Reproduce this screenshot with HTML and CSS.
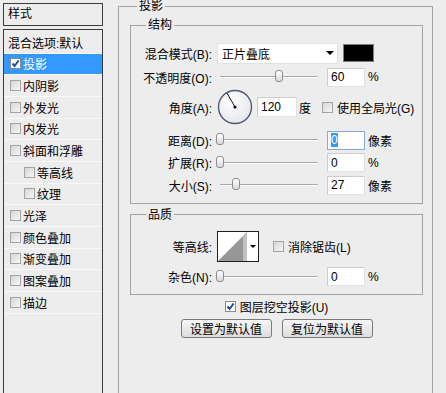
FILE: index.html
```html
<!DOCTYPE html>
<html lang="zh-CN">
<head>
  <meta charset="UTF-8" />
  <title>图层样式</title>
  <link rel="stylesheet" href="styles.css">
</head>
<body>
<div class="dialog">
  <div class="side">
    <div class="side-title">样式</div>
    <ul class="style-list">
      <li class="plain">混合选项:默认</li>
      <li class="active"><span class="cb on"><svg width="9" height="9" viewBox="0 0 9 9"><path d="M1.5 4.5 L3.6 7 L7.6 1.5" fill="none" stroke="#1f4e9c" stroke-width="2"/></svg></span>投影</li>
      <li><span class="cb"></span>内阴影</li>
      <li><span class="cb"></span>外发光</li>
      <li><span class="cb"></span>内发光</li>
      <li><span class="cb"></span>斜面和浮雕</li>
      <li class="sub"><span class="cb"></span>等高线</li>
      <li class="sub"><span class="cb"></span>纹理</li>
      <li><span class="cb"></span>光泽</li>
      <li><span class="cb"></span>颜色叠加</li>
      <li><span class="cb"></span>渐变叠加</li>
      <li><span class="cb"></span>图案叠加</li>
      <li><span class="cb"></span>描边</li>
    </ul>
  </div>

  <div class="main">
    <fieldset class="group outer">
      <legend>投影</legend>

      <fieldset class="group inner structure">
        <legend>结构</legend>
        <div class="row r-blend">
          <label class="lbl">混合模式(B):</label>
          <div class="select">正片叠底<span class="arrow"></span></div>
          <span class="swatch"></span>
        </div>
        <div class="row r-opacity">
          <label class="lbl">不透明度(O):</label>
          <div class="slider"><span class="thumb" style="left: 60%"></span></div>
          <div class="num">60</div>
          <span class="unit">%</span>
        </div>
        <div class="row r-angle">
          <label class="lbl">角度(A):</label>
          <div class="dial">
            <svg width="36" height="36" viewBox="0 0 36 36">
              <defs>
                <radialGradient id="dialbg" cx="40%" cy="35%" r="70%">
                  <stop offset="0" stop-color="#ffffff"/>
                  <stop offset="1" stop-color="#e4e5ec"/>
                </radialGradient>
              </defs>
              <circle cx="18" cy="18" r="16.5" fill="url(#dialbg)" stroke="#4f586c" stroke-width="1.4"/>
              <line x1="18" y1="18" x2="10" y2="4.2" stroke="#111" stroke-width="1"/>
              <circle cx="18" cy="18" r="1.6" fill="#000"/>
            </svg>
          </div>
          <div class="num wide">120</div>
          <span class="unit deg">度</span>
          <div class="check"><span class="cb"></span>使用全局光(G)</div>
        </div>
        <div class="row r-small first">
          <label class="lbl">距离(D):</label>
          <div class="slider"><span class="thumb" style="left: 0%"></span></div>
          <div class="num focus"><span class="sel">0</span></div>
          <span class="unit">像素</span>
        </div>
        <div class="row r-small">
          <label class="lbl">扩展(R):</label>
          <div class="slider"><span class="thumb" style="left: 0%"></span></div>
          <div class="num">0</div>
          <span class="unit">%</span>
        </div>
        <div class="row r-small">
          <label class="lbl">大小(S):</label>
          <div class="slider"><span class="thumb" style="left: 16%"></span></div>
          <div class="num">27</div>
          <span class="unit">像素</span>
        </div>
      </fieldset>

      <fieldset class="group inner quality">
        <legend>品质</legend>
        <div class="row r-contour">
          <label class="lbl">等高线:</label>
          <div class="contour">
            <svg width="29" height="29" viewBox="0 0 29 29">
              <rect width="29" height="29" fill="#fff"/>
              <polygon points="0,29 29,0 29,29" fill="#979797"/>
              <polygon points="25,4 29,0 29,29 25,29" fill="#c2c2c2"/>
            </svg>
            <div class="drop"><span class="arrow"></span></div>
          </div>
          <div class="check aa"><span class="cb"></span>消除锯齿(L)</div>
        </div>
        <div class="row r-noise">
          <label class="lbl">杂色(N):</label>
          <div class="slider"><span class="thumb" style="left: 0%"></span></div>
          <div class="num">0</div>
          <span class="unit">%</span>
        </div>
      </fieldset>

      <div class="knock"><span class="cb on"><svg width="9" height="9" viewBox="0 0 9 9"><path d="M1.5 4.5 L3.6 7 L7.6 1.5" fill="none" stroke="#1f4e9c" stroke-width="2"/></svg></span>图层挖空投影(U)</div>
      <div class="buttons">
        <button class="btn">设置为默认值</button>
        <button class="btn">复位为默认值</button>
      </div>
    </fieldset>
  </div>
</div>
</body>
</html>
```

FILE: styles.css
```css
* {
  box-sizing: border-box;
}
body {
  margin: 0;
  background-color: #ededed;
  font-family: "Liberation Sans", "Noto Sans CJK SC", sans-serif;
  font-size: 12px;
  color: #000;
}
.dialog {
  display: flex;
  width: 446px;
  height: 393px;
  overflow: hidden;
}

/* left column */
.side {
  width: 100px;
  margin: 3px 0 0 3px;
  flex-shrink: 0;
}
.side-title {
  height: 23px;
  line-height: 21px;
  padding-left: 4px;
  border: 1px solid #3c3c3c;
}
.style-list {
  list-style: none;
  margin: 3px 0 0;
  padding: 2px 0 0;
  height: 420px;
  border: 1px solid #3c3c3c;
}
.style-list li {
  display: flex;
  align-items: center;
  height: 21.67px;
  padding-left: 6px;
  border-bottom: 1px solid #f9f9f9;
  white-space: nowrap;
}
.style-list li.plain {
  padding-left: 4px;
}
.style-list li.sub {
  padding-left: 20px;
}
.style-list li.active {
  background-color: #3399ff;
  color: #fff;
}

.cb {
  display: inline-flex;
  align-items: center;
  justify-content: center;
  width: 11px;
  height: 11px;
  margin-right: 2px;
  flex-shrink: 0;
  border: 1px solid #a3a3a3;
  background: linear-gradient(135deg, #d6d6d6, #f7f7f7);
}
.cb.on {
  background: #fff;
  border-color: #8c8c8c;
}
.cb svg {
  display: block;
}

/* right column */
.main {
  flex: 1;
}
.group {
  margin: 0;
  padding: 0;
  min-width: 0;
  border: 1px solid #a3a3a3;
}
.group legend {
  padding: 0 2px;
  line-height: 14px;
}
.outer {
  margin: 0 0 0 15px;
  width: 315px;
  min-height: 420px;
  padding: 6px 9px 0 11px;
}
.outer > legend {
  margin-left: 7px;
  line-height: 12px;
}
.inner > legend {
  margin-left: 15px;
}
.structure {
  padding: 9px 0 6px;
}
.quality {
  margin-top: 4px;
  padding: 9px 0 6px;
}

.row {
  display: flex;
  align-items: center;
  white-space: nowrap;
}
.r-blend, .r-opacity {
  height: 24px;
}
.r-angle {
  height: 36px;
}
.r-small {
  height: 22.5px;
}
.r-small.first {
  margin-top: 4px;
}
.r-contour {
  height: 32px;
}
.r-noise {
  height: 22px;
  margin-top: 3px;
}
.lbl {
  width: 81px;
  flex-shrink: 0;
  text-align: right;
}

.select {
  display: flex;
  align-items: center;
  margin-left: 5px;
  width: 121px;
  height: 21px;
  padding-left: 4px;
  background: #fff;
  border: 1px solid #e1e1e1;
}
.arrow {
  width: 0;
  height: 0;
  border-left: 4px solid transparent;
  border-right: 4px solid transparent;
  border-top: 4px solid #000;
}
.select .arrow {
  margin-left: auto;
  margin-right: 3px;
}
.swatch {
  margin-left: 5px;
  width: 31px;
  height: 18px;
  background: #000;
  border: 1px solid #7e7e7e;
}

.slider {
  position: relative;
  margin-left: 8px;
  width: 98px;
  height: 2px;
  border-top: 1px solid #a9a9a9;
  border-bottom: 1px solid #fff;
}
.thumb {
  position: absolute;
  top: -7px;
  width: 8px;
  height: 12px;
  margin-left: -4px;
  border: 1px solid #8d8d8d;
  border-radius: 3px;
  background: linear-gradient(#ffffff, #d9d9d9);
}

.num {
  display: flex;
  align-items: center;
  margin-left: 9px;
  width: 38px;
  height: 19px;
  padding-left: 3px;
  background: #fff;
  border: 1px solid #e2e2e2;
  border-top-color: #cdcdcd;
  border-left-color: #cdcdcd;
}
.num.wide {
  margin-left: 4px;
  width: 40px;
  height: 20px;
}
.num.focus {
  border-color: #82acdc;
}
.sel {
  background: #3399ff;
  color: #fff;
}
.unit {
  margin-left: 3px;
}
.unit.deg {
  margin-left: 2px;
}
.dial {
  margin-left: 5px;
  width: 36px;
  height: 36px;
}
.dial svg {
  display: block;
}
.check {
  display: flex;
  align-items: center;
  margin-left: 11px;
}
.check .cb, .knock .cb {
  margin-right: 4px;
}
.check.aa {
  margin-left: 14px;
}

.contour {
  display: flex;
  margin-left: 5px;
  width: 42px;
  height: 31px;
  background: #fff;
  border: 1px solid #1e1e1e;
}
.contour svg {
  display: block;
}
.drop {
  flex: 1;
  display: flex;
  align-items: center;
  justify-content: center;
}
.drop .arrow {
  border-left-width: 3px;
  border-right-width: 3px;
  border-top-width: 3px;
}

.knock {
  display: flex;
  justify-content: center;
  align-items: center;
  height: 18px;
  margin-top: 3px;
}
.buttons {
  display: flex;
  justify-content: center;
  gap: 10px;
  margin-top: 3px;
}
.btn {
  width: 91px;
  height: 19px;
  padding: 0;
  font: inherit;
  color: #000;
  border: 1px solid #7a7a7a;
  border-radius: 3px;
  background: linear-gradient(#f7f7f7, #dddddd);
}
```
